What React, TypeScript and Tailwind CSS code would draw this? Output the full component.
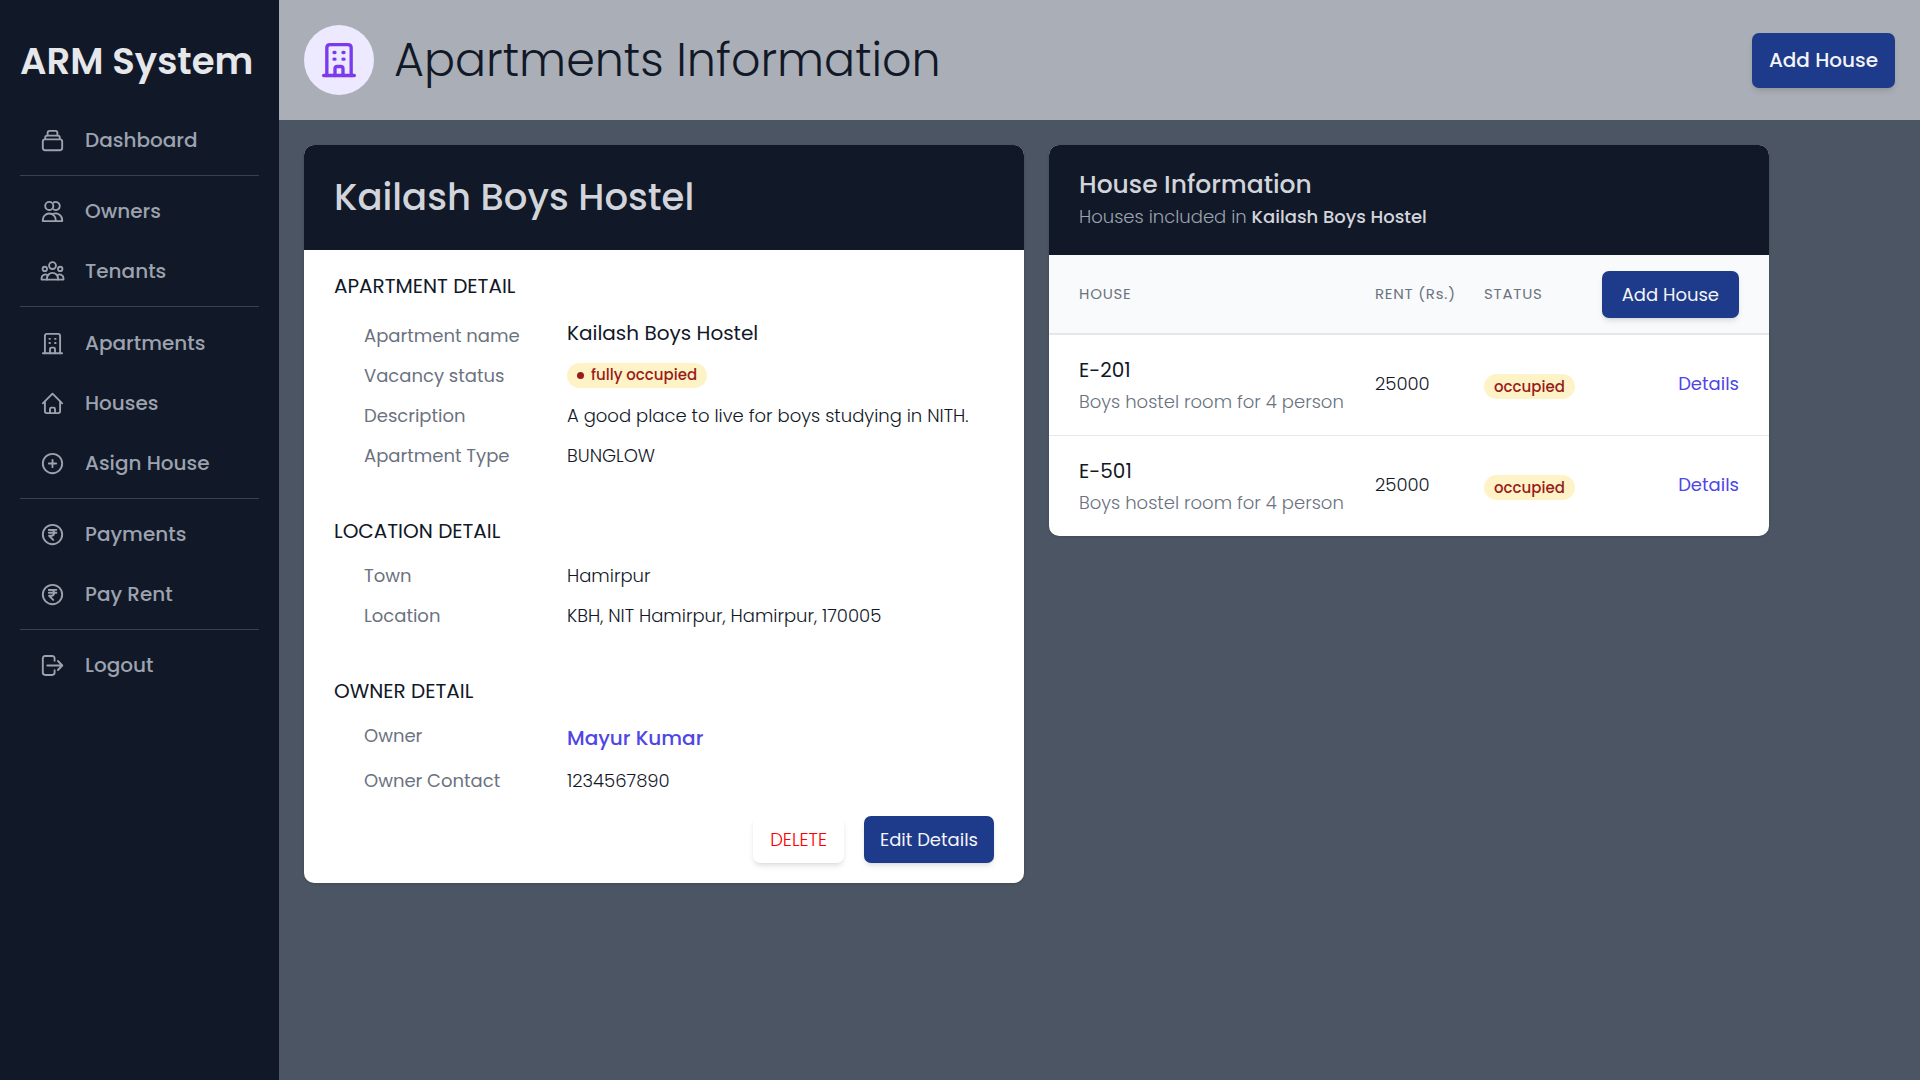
import type { ReactNode } from 'react';

type IconProps = { className?: string; strokeWidth?: number };

function Icon({ className = 'size-[25px]', strokeWidth = 1.8, children }: IconProps & { children: ReactNode }) {
  return (
    <svg
      className={`shrink-0 ${className}`}
      viewBox="0 0 24 24"
      fill="none"
      stroke="currentColor"
      strokeWidth={strokeWidth}
      strokeLinecap="round"
      strokeLinejoin="round"
      aria-hidden="true"
    >
      {children}
    </svg>
  );
}

const StackIcon = () => (
  <Icon>
    <rect x="2.7" y="10.9" width="18.6" height="10.4" rx="2" />
    <path d="M5 10.7V9.2c0-1.1.7-1.9 1.8-1.9h10.4c1.1 0 1.8.8 1.8 1.9v1.5" />
    <path d="M7.3 7.1V5c0-1.3.7-2.2 1.9-2.2h5.6c1.2 0 1.9.9 1.9 2.2v2.1" />
  </Icon>
);

const OwnersIcon = () => (
  <Icon>
    <circle cx="8.9" cy="6.7" r="3.9" />
    <path d="M13.2 3.3a3.9 3.9 0 1 1 0 6.8" />
    <path d="M2.7 21.2v-1.1a6.2 6.2 0 0 1 12.4 0v1.1Z" />
    <path d="M12 14.4c4.6-2 9.3 1.2 9.3 5.7v1.1h-6.2" />
  </Icon>
);

const TenantsIcon = () => (
  <Icon>
    <circle cx="12" cy="6.3" r="3.3" />
    <circle cx="4.6" cy="9.5" r="2.1" />
    <circle cx="19.4" cy="9.5" r="2.1" />
    <path d="M6.7 19.8v-1.2a5.3 5.3 0 0 1 10.6 0v1.2Z" />
    <path d="M6.7 19.8H1.5v-1.5a3.5 3.5 0 0 1 5.7-2.7" />
    <path d="M17.3 19.8h5.2v-1.5a3.5 3.5 0 0 0-5.7-2.7" />
  </Icon>
);

const BuildingIcon = (props: IconProps) => (
  <Icon {...props}>
    <path d="M2.8 21.3h18.4" />
    <path d="M4.7 21.3V4.7c0-1.1.8-1.9 1.9-1.9h10.8c1.1 0 1.9.8 1.9 1.9v16.6" />
    <path d="M9.6 21.3v-4c0-.8.6-1.4 1.4-1.4h2c.8 0 1.4.6 1.4 1.4v4" />
    <path d="M9 7.5h.6M14.4 7.5h.6M9 11.5h.6M14.4 11.5h.6" />
  </Icon>
);

const HomeIcon = () => (
  <Icon>
    <path d="m2.7 11.8 9.3-9.2 9.3 9.2" />
    <path d="M4.7 10.2v9.3c0 1 .7 1.7 1.7 1.7h11.2c1 0 1.7-.7 1.7-1.7v-9.3" />
    <path d="M9.6 21v-3.7c0-.8.6-1.4 1.4-1.4h2c.8 0 1.4.6 1.4 1.4V21" />
  </Icon>
);

const PlusCircleIcon = () => (
  <Icon>
    <circle cx="12" cy="12" r="9.3" />
    <path d="M12 8.5v7M8.5 12h7" />
  </Icon>
);

const RupeeIcon = () => (
  <Icon>
    <circle cx="12" cy="12" r="9.3" />
    <path d="M8.5 7.5h7.2M8.5 10.3h7.2" />
    <path d="M8.5 7.5h2.3c3.6 0 3.6 5.7 0 5.7H8.7l4 4" />
  </Icon>
);

const LogoutIcon = () => (
  <Icon>
    <path d="M14 7.5V5.2c0-1.3-1-2.3-2.3-2.3H5c-1.3 0-2.3 1-2.3 2.3v13.6c0 1.3 1 2.3 2.3 2.3h6.7c1.3 0 2.3-1 2.3-2.3v-2.3" />
    <path d="M7 12h14M17.2 7.7l4.2 4.3-4.2 4.3" />
  </Icon>
);

const navGroups = [
  [{ label: 'Dashboard', icon: <StackIcon /> }],
  [
    { label: 'Owners', icon: <OwnersIcon /> },
    { label: 'Tenants', icon: <TenantsIcon /> },
  ],
  [
    { label: 'Apartments', icon: <BuildingIcon /> },
    { label: 'Houses', icon: <HomeIcon /> },
    { label: 'Asign House', icon: <PlusCircleIcon /> },
  ],
  [
    { label: 'Payments', icon: <RupeeIcon /> },
    { label: 'Pay Rent', icon: <RupeeIcon /> },
  ],
  [{ label: 'Logout', icon: <LogoutIcon /> }],
];

function Sidebar() {
  return (
    <aside className="w-[279px] shrink-0 bg-[#111827] px-5">
      <p className="flex h-[110px] items-center pt-[14px] text-[37px] font-semibold whitespace-nowrap text-[#e5e7eb]">
        ARM System
      </p>
      <nav className="divide-y divide-[#374151]">
        {navGroups.map((group) => (
          <ul key={group[0].label} className="py-[5px] first:pt-0 nth-3:pt-[6px]">
            {group.map((item) => (
              <li key={item.label}>
                <a href="#" className="flex h-[60px] items-center gap-5 px-5 text-[20px] font-medium text-[#9ca3af]">
                  {item.icon}
                  {item.label}
                </a>
              </li>
            ))}
          </ul>
        ))}
      </nav>
    </aside>
  );
}

type RowProps = { label: string; children: ReactNode; tall?: 'top' | 'bottom' };

function DetailRow({ label, children, tall }: RowProps) {
  return (
    <div className={`grid grid-cols-[203px_1fr] ${tall ? 'h-[45px]' : 'h-10'}`}>
      <dt
        className={`flex h-10 items-center text-[18px] font-normal text-[#6b7280] ${tall === 'bottom' ? 'self-end' : ''}`}
      >
        {label}
      </dt>
      <dd className="flex items-center text-[18px] whitespace-nowrap text-[#111827]">{children}</dd>
    </div>
  );
}

function Section({ title, children }: { title: string; children: ReactNode }) {
  return (
    <section>
      <h3 className="text-[20px] leading-[30px] font-normal text-[#111827]">{title}</h3>
      <dl className="mt-[9px] pl-[30px]">{children}</dl>
    </section>
  );
}

function Badge({ children }: { children: ReactNode }) {
  return (
    <span className="inline-flex h-[25px] items-center rounded-full bg-[#fef3c7] px-[10px] pt-px text-[15px] font-medium text-[#991b1b]">
      {children}
    </span>
  );
}

function ApartmentCard() {
  return (
    <article className="overflow-hidden rounded-[10px] bg-white shadow">
      <header className="flex h-[105px] items-center bg-[#111827] px-[30px]">
        <h2 className="text-[37px] font-medium text-[#d1d5db]">Kailash Boys Hostel</h2>
      </header>
      <div className="px-[30px] pt-[21px] pb-5">
        <div className="flex flex-col gap-[41px]">
          <Section title="APARTMENT DETAIL">
            <DetailRow label="Apartment name" tall="bottom">
              <span className="text-[20px]">Kailash Boys Hostel</span>
            </DetailRow>
            <DetailRow label="Vacancy status">
              <Badge>
                <span className="mr-[7px] size-[7px] rounded-full bg-[#991b1b]" />
                fully occupied
              </Badge>
            </DetailRow>
            <DetailRow label="Description">
              <span className="font-light">A good place to live for boys studying in NITH.</span>
            </DetailRow>
            <DetailRow label="Apartment Type">
              <span className="font-light">BUNGLOW</span>
            </DetailRow>
          </Section>
          <Section title="LOCATION DETAIL">
            <DetailRow label="Town">
              <span className="font-light">Hamirpur</span>
            </DetailRow>
            <DetailRow label="Location">
              <span className="font-light">KBH, NIT Hamirpur, Hamirpur, 170005</span>
            </DetailRow>
          </Section>
          <Section title="OWNER DETAIL">
            <DetailRow label="Owner" tall="top">
              <a href="#" className="text-[20px] font-medium text-[#4f46e5]">
                Mayur Kumar
              </a>
            </DetailRow>
            <DetailRow label="Owner Contact">
              <span className="font-light">1234567890</span>
            </DetailRow>
          </Section>
        </div>
        <div className="mt-4 flex justify-end gap-5">
          <button
            type="button"
            className="h-[47px] rounded-[7px] bg-white px-[17px] text-[18px] font-light text-[#ff0000] shadow-md"
          >
            DELETE
          </button>
          <button
            type="button"
            className="h-[47px] rounded-[7px] bg-[#1e3a8a] px-4 text-[18px] font-normal text-[#f3f4f6] shadow-md"
          >
            Edit Details
          </button>
        </div>
      </div>
    </article>
  );
}

const houses = [
  { name: 'E-201', description: 'Boys hostel room for 4 person', rent: 25000, status: 'occupied' },
  { name: 'E-501', description: 'Boys hostel room for 4 person', rent: 25000, status: 'occupied' },
];

function HouseCard() {
  return (
    <article className="overflow-hidden rounded-[10px] bg-white shadow">
      <header className="h-[110px] bg-[#111827] px-[30px] pt-[21px]">
        <h2 className="text-[25px] leading-[37px] font-medium text-[#d1d5db]">House Information</h2>
        <p className="text-[18px] leading-[28px] font-light text-[#9ca3af]">
          Houses included in <strong className="font-medium text-[#d1d5db]">Kailash Boys Hostel</strong>
        </p>
      </header>
      <table className="w-full table-fixed text-left">
        <colgroup>
          <col className="w-[326px]" />
          <col className="w-[109px]" />
          <col className="w-[110px]" />
          <col />
        </colgroup>
        <thead>
          <tr className="h-[79px] border-b-2 border-[#e5e7eb] bg-[#f9fafb] text-[15px] text-[#6b7280]">
            <th className="pl-[30px] font-normal tracking-wider">HOUSE</th>
            <th className="font-normal tracking-wider whitespace-nowrap">RENT (Rs.)</th>
            <th className="font-normal tracking-wider">STATUS</th>
            <th className="pr-[30px] text-right">
              <button
                type="button"
                className="h-[47px] rounded-[7px] bg-[#1e3a8a] px-5 align-middle text-[18px] font-normal text-[#f3f4f6] shadow-md"
              >
                Add House
              </button>
            </th>
          </tr>
        </thead>
        <tbody className="divide-y divide-[#e5e7eb]">
          {houses.map((house) => (
            <tr key={house.name} className="h-[101px] text-[18px]">
              <td className="pt-[2px] pl-[30px] whitespace-nowrap">
                <p className="text-[20px] leading-[32px] text-[#111827]">{house.name}</p>
                <p className="leading-[32px] font-light text-[#6b7280]">{house.description}</p>
              </td>
              <td className="pb-[2px] font-light text-[#111827]">{house.rent}</td>
              <td className="pt-px">
                <Badge>{house.status}</Badge>
              </td>
              <td className="pr-[30px] pb-[2px] text-right">
                <a href="#" className="font-normal text-[#4f46e5]">
                  Details
                </a>
              </td>
            </tr>
          ))}
        </tbody>
      </table>
    </article>
  );
}

export default function App() {
  return (
    <div className="flex min-h-screen bg-[#4b5563] font-['Poppins','Inter',sans-serif]">
      <Sidebar />
      <main className="min-w-0 flex-1">
        <header className="flex h-[120px] items-center justify-between bg-[#aaaeb6] px-[25px]">
          <div className="flex items-center gap-5">
            <span className="flex size-[70px] items-center justify-center rounded-full bg-[#ede9fe] text-[#7c3aed]">
              <BuildingIcon className="size-10" strokeWidth={2} />
            </span>
            <h1 className="text-[46px] font-light text-[#111827]">Apartments Information</h1>
          </div>
          <button
            type="button"
            className="h-[55px] rounded-[7px] bg-[#1e3a8a] px-[17px] text-[20px] font-medium text-[#f3f4f6] shadow-md"
          >
            Add House
          </button>
        </header>
        <div className="grid max-w-[1515px] grid-cols-2 items-start gap-[25px] p-[25px]">
          <ApartmentCard />
          <HouseCard />
        </div>
      </main>
    </div>
  );
}
